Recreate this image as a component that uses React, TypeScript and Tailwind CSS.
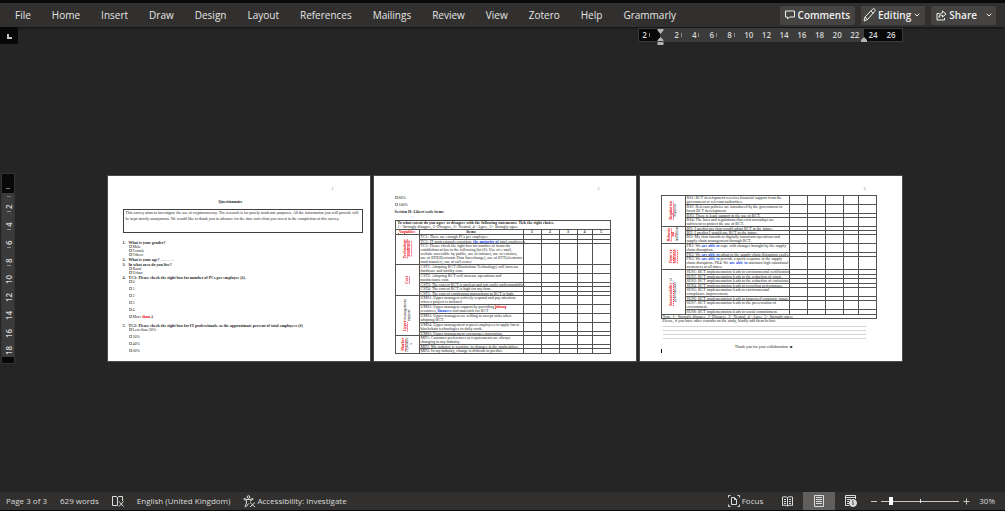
import * as React from "react"
import { clsx } from "clsx"
import { ChevronDown } from "lucide-react"

const menuItems = [
  "File",
  "Home",
  "Insert",
  "Draw",
  "Design",
  "Layout",
  "References",
  "Mailings",
  "Review",
  "View",
  "Zotero",
  "Help",
  "Grammarly",
]

interface Item {
  text: React.ReactNode
  // single-line rows with reduced leading
  tight?: boolean
  wrap?: boolean
}

interface Group {
  label: React.ReactNode
  items: Item[]
}

const Misspelled = ({ children }: { children: React.ReactNode }) => (
  <span className="font-bold text-red-600 underline decoration-red-500 decoration-dotted decoration-1 underline-offset-0">
    {children}
  </span>
)

const Grammar = ({ children }: { children: React.ReactNode }) => (
  <span className="font-bold text-blue-700">{children}</span>
)

const groupsPageTwo: Group[] = [
  {
    label: <Misspelled>{"Technology\nreadiness"}</Misspelled>,
    items: [
      { text: "TC1: There are enough PCs per employee." },
      { text: <>TC2: IT professionals constitute <Grammar>the majority of</Grammar> total employees.</>, tight: true },
      {
        text: "TC3: Please check the right box for number of items the establishment has in the following list (#): Use of e-mail, website accessible by public, use of intranet, use of extranet, use of EDI(Electronic Data Interchange), use of EFT(electronic fund transfer), use of call center",
        wrap: true,
      },
    ],
  },
  {
    label: <Misspelled>Cost</Misspelled>,
    items: [
      { text: "CST1: Adopting BCT (Blockchain Technology) will increase hardware and facility cost.", wrap: true },
      { text: "CST2: Adopting BCT will increase operations and maintenance cost.", wrap: true },
      { text: "CST3: The cost of BCT is unclear and not easily understandable.", tight: true },
      { text: "CST4: The cost of BCT is high for my firm." },
      { text: "CST5: The cost of confirming transactions in BCT is high.", tight: true },
    ],
  },
  {
    label: <><Misspelled>Upper</Misspelled>{" management\nsupport"}</>,
    items: [
      { text: "UMS1: Upper managers actively respond and pay attention when a project is initiated", wrap: true },
      {
        text: <>UMS2: Upper managers support by providing <Misspelled>labour</Misspelled> resources, <Grammar>finances</Grammar> and materials for BCT</>,
        wrap: true,
      },
      { text: "UMS3: Upper managers are willing to accept risks when adopting BCT.", wrap: true },
      { text: "UMS4: Upper management request employees to apply latest blockchain technologies in daily work.", wrap: true },
      { text: "UMS5: Upper management encourages innovation.", tight: true },
    ],
  },
  {
    label: <><Misspelled>Market</Misspelled>{"\nDynamic\ns"}</>,
    items: [
      { text: "MD1: Customer preferences or requirements are always changing in my industry.", wrap: true },
      { text: "MD2: My industry is sensitive to changes in the marketplace.", tight: true },
      { text: "MD3: In my industry, change is difficult to predict." },
    ],
  },
]

const groupsPageThree: Group[] = [
  {
    label: <><Misspelled>Regulation</Misspelled>{"\nSupport"}</>,
    items: [
      { text: "RS1: BCT development receives financial support from the government or relevant authorities.", wrap: true },
      { text: "RS2: Relevant policies are introduced by the government to boost BCT development.", wrap: true },
      { text: "RS3: There is legal support in the use of BCT.", tight: true },
      { text: "RS4: The laws and regulations that exist nowadays are sufficient to protect the use of BCT.", wrap: true },
    ],
  },
  {
    label: <><Misspelled>{"Behavio\nral"}</Misspelled>{"\nIntention"}</>,
    items: [
      { text: "BI1: I predict my firm would adopt BCT in the future.", tight: true },
      { text: "BI2: I predict I would use BCT in the future.", tight: true },
      { text: "BI3: My firm intends to digitally transform operations and supply chain management through BCT.", wrap: true },
    ],
  },
  {
    label: <Misspelled>{"Firm's r\nesilience"}</Misspelled>,
    items: [
      { text: <>FR1: We <Grammar>are able to</Grammar> cope with changes brought by the supply chain disruption.</>, wrap: true },
      { text: <>FR2: We <Grammar>are able to</Grammar> adapt to the supply chain disruption easily.</>, tight: true },
      {
        text: <>FR3: We <Grammar>are able to</Grammar> provide a quick response to the supply chain disruption. FR4: We <Grammar>are able to</Grammar> maintain high situational awareness at all times.</>,
        wrap: true,
      },
    ],
  },
  {
    label: <><Misspelled>Sustainability</Misspelled>{" of\nperformance"}</>,
    items: [
      { text: "SUS1: BCT implementation leads to environmental certification." },
      { text: "SUS2: BCT implementation leads to the reduction of waste.", tight: true },
      { text: "SUS3: BCT implementation leads to the reduction of emissions." },
      { text: "SUS4: BCT implementation leads to recycling performance.", tight: true },
      { text: "SUS5: BCT implementation leads to environmental compliance improvement.", wrap: true },
      { text: "SUS6: BCT implementation leads to improved corporate image.", tight: true },
      { text: "SUS7: BCT implementation leads to the preservation of\nenvironment." },
      { text: "SUS8: BCT implementation leads to social commitment." },
    ],
  },
]

function Page({ number, children }: { number: number; children: React.ReactNode }) {
  return (
    <article className="relative h-[185px] w-[262px] shrink-0 overflow-hidden bg-white font-['Liberation_Serif',serif] text-[4px] leading-[4px] text-neutral-800 outline outline-[#4a4a4a]">
      <div className="flex justify-end pt-[11px] pr-9 text-neutral-500">{number}</div>
      {children}
    </article>
  )
}

function Option({ children }: { children: React.ReactNode }) {
  return (
    <label className="flex items-center gap-px">
      <input type="checkbox" className="size-[3px] appearance-none border border-neutral-400" />
      <span>{children}</span>
    </label>
  )
}

interface QuestionProps {
  number: number
  title: React.ReactNode
  options?: React.ReactNode[]
  spaced?: boolean
}

function Question({ number, title, options = [], spaced }: QuestionProps) {
  return (
    <li className="flex">
      <span className="w-[6px] font-bold leading-[5px]">{number}.</span>
      <div>
        <p className="font-bold leading-[5px]">{title}</p>
        <div className={clsx("flex flex-col", spaced && "gap-[3px] pb-1")}>
          {options.map((option, i) => (
            <Option key={i}>{option}</Option>
          ))}
        </div>
      </div>
    </li>
  )
}

function LikertTable({ groups, head, foot }: { groups: Group[]; head?: React.ReactNode; foot?: React.ReactNode }) {
  return (
    <table className="w-[215px] table-fixed border-collapse whitespace-pre [&_td]:border [&_td]:border-neutral-600 [&_td]:p-0 [&_th]:border [&_th]:border-neutral-600 [&_th]:p-0">
      <colgroup>
        <col className="w-6" />
        <col className="w-[104px]" />
        <col className="w-[18px]" />
        <col className="w-[18px]" />
        <col className="w-[18px]" />
        <col className="w-[15px]" />
        <col className="w-[18px]" />
      </colgroup>
      {head && <thead>{head}</thead>}
      <tbody>
        {groups.map((group, g) =>
          group.items.map((item, i) => (
            <tr key={`${g}-${i}`} className={item.tight ? "leading-[3px]" : "leading-[4px]"}>
              {i === 0 && (
                <td rowSpan={group.items.length} className="leading-[4px]">
                  <div className="flex items-center justify-center">
                    <span className="rotate-180 text-center [writing-mode:vertical-rl]">{group.label}</span>
                  </div>
                </td>
              )}
              <td>
                <div className={clsx("pl-px", item.wrap && "whitespace-normal")}>{item.text}</div>
              </td>
              <td />
              <td />
              <td />
              <td />
              <td />
            </tr>
          ))
        )}
      </tbody>
      {foot && <tfoot>{foot}</tfoot>}
    </table>
  )
}

function PageOne() {
  return (
    <Page number={1}>
      <h1 className="mt-[9px] pr-4 text-center font-bold">Questionnaire</h1>
      <div className="mt-[5px] mr-[7px] ml-[15px] h-6 border border-neutral-700 px-[2px] leading-[6px]">
        <p>
          This survey aims to investigate the use of cryptocurrency. The research is for purely academic purposes. All the information you will provide will be kept
          strictly anonymous. We would like to thank you in advance for the time and effort you invest in the completion of this survey.
        </p>
      </div>
      <ol className="mt-[7px] ml-[15px] whitespace-nowrap">
        <Question number={1} title="What is your gender?" options={["Male", "Female", "Others"]} />
        <Question number={2} title={<>What is your age? <span className="font-normal text-neutral-500">..............</span></>} />
        <Question number={3} title="In what area do you live?" options={["Rural", "Urban"]} />
        <Question
          number={4}
          title="TC1: Please check the right box for number of PCs per employee (#)."
          options={["0", "1", "2", "3", "4", <>More <Misspelled>than</Misspelled> 4</>]}
          spaced
        />
        <Question
          number={5}
          title="TC2: Please check the right box for IT professionals, as the approximate percent of total employees (#)"
          options={["Less than 20%", "20%", "40%", "60%"]}
          spaced
        />
      </ol>
    </Page>
  )
}

function PageTwo() {
  return (
    <Page number={2}>
      <div className="mt-[5px] ml-[21px]">
        <div className="flex flex-col gap-[3px]">
          <Option>80%</Option>
          <Option>100%</Option>
          <h2 className="font-bold">Section II: Likert scale items</h2>
        </div>
        <div className="mt-[6px]">
          <LikertTable
            groups={groupsPageTwo}
            head={
              <>
                <tr>
                  <th colSpan={7} className="text-left font-normal">
                    <div className="pl-[2px]">
                      <b>To what extent do you agree or disagree with the following statements: Tick the right choice.</b>
                      {"\n1= Strongly disagree, 2=Disagree, 3= Neutral, 4= Agree, 5= Strongly agree"}
                    </div>
                  </th>
                </tr>
                <tr>
                  <th><Misspelled>Variables</Misspelled></th>
                  <th>Items</th>
                  <th>1</th>
                  <th>2</th>
                  <th>3</th>
                  <th>4</th>
                  <th>5</th>
                </tr>
              </>
            }
          />
        </div>
      </div>
    </Page>
  )
}

function PageThree() {
  return (
    <Page number={3}>
      <div className="mt-1 ml-[21px]">
        <LikertTable
          groups={groupsPageThree}
          foot={
            <tr className="leading-[3px]">
              <td colSpan={7}>
                <div className="pl-px">Note: 1= Strongly disagree, 2=Disagree, 3= Neutral, 4= Agree, 5= Strongly agree</div>
              </td>
            </tr>
          }
        />
        <div className="w-[205px] pl-[2px]">
          <p>Please, if you have other remarks on the study, kindly add them below:</p>
          <div className="flex flex-col gap-[3px] pt-[3px]">
            <hr className="border-neutral-300" />
            <hr className="border-neutral-300" />
            <hr className="border-neutral-300" />
            <hr className="border-neutral-300" />
          </div>
          <p className="mt-[6px] text-center">Thank you for your collaboration ☻</p>
        </div>
        <div className="h-1 w-px bg-black" />
      </div>
    </Page>
  )
}

function RulerMark({ value, vertical }: { value: number; vertical?: boolean }) {
  return (
    <span
      className={clsx(
        "flex items-center justify-center gap-[2px]",
        vertical ? "h-3 rotate-180 flex-row-reverse [writing-mode:vertical-rl]" : "w-[14px]"
      )}
    >
      {value}
      {value < 10 && <i className={clsx("bg-[#8a8a8a]", vertical ? "h-px w-1" : "h-1 w-px")} />}
    </span>
  )
}

function HorizontalRuler() {
  return (
    <div className="relative flex h-3 w-[263px] text-[8px] font-semibold text-[#d6d6d6] outline outline-[#3a3a3a]">
      <div className="flex w-[21px] items-center bg-[#080808]">
        <RulerMark value={2} />
      </div>
      <div className="flex flex-1 items-center justify-between bg-[#3b3b3b] pr-[2px] pl-[11px]">
        {[2, 4, 6, 8, 10, 12, 14, 16, 18, 20, 22].map((n) => (
          <RulerMark key={n} value={n} />
        ))}
      </div>
      <div className="flex w-[38px] items-center gap-1 bg-[#080808] pl-[2px]">
        <RulerMark value={24} />
        <RulerMark value={26} />
      </div>
      <svg className="absolute top-0 left-[18px]" width="7" height="16" viewBox="0 0 7 16" fill="#b4b4b4">
        <path d="M0.5 0h6v1.5L3.5 5 0.5 1.5zM3.5 8l3 3v1h-6v-1zM0.5 13h6v3h-6z" />
      </svg>
      <svg className="absolute top-2 right-[35px]" width="6" height="5" viewBox="0 0 6 5" fill="#b4b4b4">
        <path d="M3 0l3 3v2H0V3z" />
      </svg>
    </div>
  )
}

function VerticalRuler() {
  return (
    <div className="flex h-[189px] w-3 flex-col text-[8px] leading-3 font-semibold text-[#d6d6d6] outline outline-[#343434]">
      <div className="flex h-[19px] items-end justify-center bg-[#080808] pb-1">
        <i className="h-px w-1 bg-[#777]" />
      </div>
      <div className="flex flex-1 flex-col items-center justify-between bg-[#3b3b3b] pt-[3px] pl-[2px]">
        <i className="h-px w-1 bg-[#777]" />
        {[2, 4, 6, 8, 10, 12, 14, 16, 18].map((n) => (
          <RulerMark key={n} value={n} vertical />
        ))}
      </div>
      <div className="h-[6px] bg-[#080808]" />
    </div>
  )
}

function Header() {
  return (
    <header className="flex h-[27px] items-center justify-between border-t-3 border-[#0b0a0a] bg-[#31302e] pr-[9px] pl-[15px] shadow-[0_1px_2px_#111]">
      <nav className="flex gap-[21px] text-[10px] text-[#e6e6e6]">
        {menuItems.map((item) => (
          <button key={item}>{item}</button>
        ))}
      </nav>
      <div className="flex gap-[6px] text-[10px] font-semibold text-[#f0f0f0]">
        <button className="flex h-[19px] items-center gap-[3px] rounded-xs bg-[#454442] px-[5px]">
          <svg width="10" height="10" viewBox="0 0 10 10" fill="none" stroke="currentColor">
            <path d="M0.5 1h9v6H4.5L2.5 9V7h-2z" />
          </svg>
          Comments
        </button>
        <button className="flex h-[19px] items-center gap-[2px] bg-[#454442] px-[2px] pr-1">
          <svg width="13" height="14" viewBox="0 0 13 14" fill="none" stroke="currentColor">
            <path d="M1 13l1-4L9.5 1.2c.7-.7 1.6-.6 2.2 0 .6.6.6 1.5 0 2.2L4.5 11.5zM8 3l2.5 2.4M2 9l2.5 2.5" />
          </svg>
          Editing
          <ChevronDown size={8} strokeWidth={3} />
        </button>
        <button className="flex h-[19px] items-center gap-[2px] rounded-xs bg-[#454442] px-[5px] pr-[3px]">
          <svg width="11" height="11" viewBox="0 0 11 11" fill="none" stroke="currentColor">
            <path d="M3.5 3.5H1V10h7.5V8M6.5 1L10 4 6.5 7V5.200C4.800 5.200 3.800 6 3 7.500 3.200 4.800 4.500 3 6.500 2.800z" />
          </svg>
          Share
          <ChevronDown size={8} strokeWidth={3} className="ml-[6px]" />
        </button>
      </div>
    </header>
  )
}

function StatusBar() {
  return (
    <footer className="flex h-[19px] items-center justify-between border-b border-[#0b0a0a] bg-[#31302e] pr-[10px] pl-[6px] text-[8px] text-[#dcdcdc]">
      <div className="flex items-center gap-[13px]">
        <button>Page 3 of 3</button>
        <button>629 words</button>
        <button aria-label="Proofing">
          <svg width="12" height="12" viewBox="0 0 12 12" fill="none" stroke="currentColor">
            <path d="M5.5 10.5H.5v-9H4l1.500 1 1.500-1h3.500V6M5.500 2.500v8M7 6.500l4.500 5M11.500 6.500L7 11.500" />
          </svg>
        </button>
        <button>English (United Kingdom)</button>
        <button className="flex items-center gap-px">
          <svg width="13" height="13" viewBox="0 0 13 13" fill="none" stroke="currentColor">
            <circle cx="5.5" cy="2" r="1.3" />
            <path d="M1 3.500c-.5.800 0 1.200 2.500 2V8L2 11.500c.5.700 1 .6 1.500 0L5.500 8.500M10 3.500c.5.800 0 1.200-2.500 2v1M1 3.500l3 1h3l3-1M7 7.500l5 4.500M12 7.500L7 12" />
          </svg>
          Accessibility: Investigate
        </button>
      </div>
      <div className="flex h-full items-center">
        <button className="mr-[10px] flex items-center gap-[2px]">
          <svg width="12" height="12" viewBox="0 0 12 12" fill="none" stroke="currentColor">
            <path d="M2.500.5H.5v2M9.500.5h2v2M2.500 11.500H.5v-2M9.500 11.500h2v-2M3.500 2.500h3l2 2v5h-5zM6.500 2.500v2h2" />
          </svg>
          Focus
        </button>
        <button aria-label="Read Mode" className="flex h-full w-7 items-center justify-center">
          <svg width="11" height="11" viewBox="0 0 11 11" fill="none" stroke="currentColor">
            <path d="M5.500 1.500C4 .6 2 .6.5 1v8.500c1.500-.4 3.500-.4 5 .5 1.500-.9 3.500-.9 5-.5V1c-1.500-.4-3.500-.4-5 .5zM5.500 1.500V10M2 3.500h2M2 5.500h2M2 7.500h2M7 3.500h2M7 5.500h2M7 7.500h2" />
          </svg>
        </button>
        <button aria-label="Print Layout" className="ml-[2px] flex h-full w-8 items-center justify-center bg-[#605f5d]">
          <svg width="10" height="12" viewBox="0 0 10 12" fill="none" stroke="currentColor">
            <path d="M.5.5h9v11h-9zM2 2.500h6M2 4.500h6M2 6.500h6M2 8.500h6" />
          </svg>
        </button>
        <button aria-label="Web Layout" className="flex h-full w-8 items-center justify-center">
          <svg width="12" height="12" viewBox="0 0 12 12" fill="none" stroke="currentColor">
            <path d="M4 10.500H.5V.5h10V4M.5 2.500h10M2 4.500h4M2 6.500h2M2 8.500h2" />
            <circle cx="8" cy="8" r="3.5" fill="#dcdcdc" />
            <path d="M8 5.500c-1 1.500.8 2 0 4.500" stroke="#31302e" />
          </svg>
        </button>
        <button aria-label="Zoom out" className="ml-[3px] flex w-[7px] justify-center">
          <i className="h-px w-[6px] bg-[#c8c8c8]" />
        </button>
        <div className="relative mx-1 flex h-2 w-[78px] items-center">
          <input
            type="range"
            aria-label="Zoom"
            min={10}
            max={200}
            defaultValue={30}
            className="h-px w-full appearance-none bg-[#c8c8c8] [&::-webkit-slider-thumb]:h-2 [&::-webkit-slider-thumb]:w-1 [&::-webkit-slider-thumb]:appearance-none [&::-webkit-slider-thumb]:bg-white"
          />
          <i className="absolute top-[2px] left-1/2 h-1 w-px bg-[#e0e0e0]" />
        </div>
        <button aria-label="Zoom in" className="mr-[9px]">
          <svg width="7" height="7" viewBox="0 0 7 7" stroke="#c8c8c8">
            <path d="M0.5 3.5h6M3.5 0.5v6" />
          </svg>
        </button>
        <button>30%</button>
      </div>
    </footer>
  )
}

export default function App() {
  return (
    <div className="flex min-h-screen flex-col bg-[#252525] font-['Open_Sans',sans-serif]">
      <Header />
      <div className="flex h-[17px]">
        <button aria-label="Tab selector" className="flex w-[18px] items-center justify-center bg-[#080808] pt-[2px]">
          <i className="size-[5px] border-b-2 border-l-2 border-[#c4c4c4]" />
        </button>
        <div className="flex flex-1 justify-center pt-[2px] pr-[14px]">
          <div className="flex w-[795px] justify-end">
            <HorizontalRuler />
          </div>
        </div>
      </div>
      <main className="flex flex-1 items-center">
        <div className="w-4 pl-[2px]">
          <VerticalRuler />
        </div>
        <div className="flex flex-1 justify-center gap-1 pr-3">
          <PageOne />
          <PageTwo />
          <PageThree />
        </div>
      </main>
      <StatusBar />
    </div>
  )
}
